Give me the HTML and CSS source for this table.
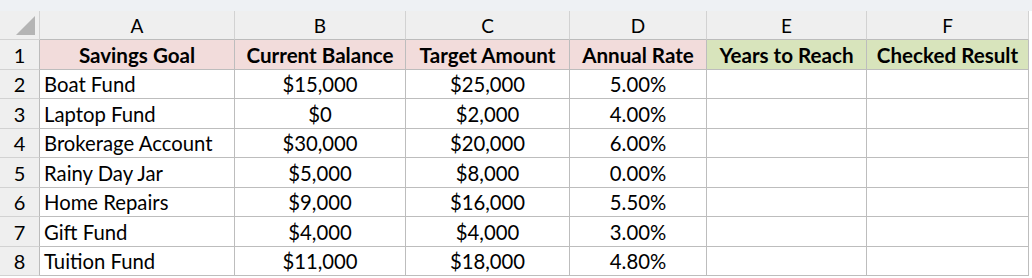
FILE: index.html
```html
<!DOCTYPE html>
<html>
<head>
<meta charset="utf-8">
<link rel="stylesheet" href="styles.css">
</head>
<body>
<div class="topbar"></div>
<div class="sheet">
  <div class="corner"><span class="tri"></span></div>
  <div class="colhdr">A</div>
  <div class="colhdr">B</div>
  <div class="colhdr">C</div>
  <div class="colhdr">D</div>
  <div class="colhdr">E</div>
  <div class="colhdr">F</div>

  <div class="rowhdr">1</div>
  <div class="cell th pink">Savings Goal</div>
  <div class="cell th pink">Current Balance</div>
  <div class="cell th pink">Target Amount</div>
  <div class="cell th pink">Annual Rate</div>
  <div class="cell th green">Years to Reach</div>
  <div class="cell th green">Checked Result</div>

  <div class="rowhdr">2</div>
  <div class="cell txt">Boat Fund</div>
  <div class="cell num">$15,000</div>
  <div class="cell num">$25,000</div>
  <div class="cell num">5.00%</div>
  <div class="cell"></div>
  <div class="cell"></div>

  <div class="rowhdr">3</div>
  <div class="cell txt">Laptop Fund</div>
  <div class="cell num">$0</div>
  <div class="cell num">$2,000</div>
  <div class="cell num">4.00%</div>
  <div class="cell"></div>
  <div class="cell"></div>

  <div class="rowhdr">4</div>
  <div class="cell txt">Brokerage Account</div>
  <div class="cell num">$30,000</div>
  <div class="cell num">$20,000</div>
  <div class="cell num">6.00%</div>
  <div class="cell"></div>
  <div class="cell"></div>

  <div class="rowhdr">5</div>
  <div class="cell txt">Rainy Day Jar</div>
  <div class="cell num">$5,000</div>
  <div class="cell num">$8,000</div>
  <div class="cell num">0.00%</div>
  <div class="cell"></div>
  <div class="cell"></div>

  <div class="rowhdr">6</div>
  <div class="cell txt">Home Repairs</div>
  <div class="cell num">$9,000</div>
  <div class="cell num">$16,000</div>
  <div class="cell num">5.50%</div>
  <div class="cell"></div>
  <div class="cell"></div>

  <div class="rowhdr">7</div>
  <div class="cell txt">Gift Fund</div>
  <div class="cell num">$4,000</div>
  <div class="cell num">$4,000</div>
  <div class="cell num">3.00%</div>
  <div class="cell"></div>
  <div class="cell"></div>

  <div class="rowhdr">8</div>
  <div class="cell txt">Tuition Fund</div>
  <div class="cell num">$11,000</div>
  <div class="cell num">$18,000</div>
  <div class="cell num">4.80%</div>
  <div class="cell"></div>
  <div class="cell"></div>
</div>
</body>
</html>
```
FILE: styles.css
```css
html, body {
  margin: 0;
  padding: 0;
  background: #ffffff;
  font-family: Lato, "Open Sans", Arial, sans-serif;
  color: #000000;
  width: 1032px;
  height: 278px;
  overflow: hidden;
}

.topbar {
  height: 11px;
  background: #eef1f4;
}

.sheet {
  display: grid;
  grid-template-columns: 40px 195px 171px 164px 137px 160px 162px;
  grid-template-rows: 29px 30px 29px 30px 29px 30px 29px 30px 29px;
  font-size: 20px;
}

.corner, .colhdr, .rowhdr {
  background: #efefef;
  box-sizing: border-box;
  border-right: 1px solid #d2d2d2;
  border-bottom: 1px solid #d2d2d2;
  display: flex;
  align-items: center;
  justify-content: center;
  font-size: 19px;
}

.colhdr {
  border-bottom-color: #bcbcbc;
  padding-top: 1px;
}

.rowhdr {
  border-right-color: #bcbcbc;
  font-size: 20px;
}

.corner {
  position: relative;
}

.tri {
  position: absolute;
  right: 4px;
  bottom: 4px;
  width: 0;
  height: 0;
  border-left: 19px solid transparent;
  border-bottom: 19px solid #b4b4b4;
}

.cell {
  box-sizing: border-box;
  border-right: 1px solid #bdbdbd;
  border-bottom: 1px solid #bdbdbd;
  display: flex;
  align-items: center;
  white-space: nowrap;
  overflow: hidden;
  font-size: 20.3px;
}

.th {
  justify-content: center;
  font-weight: 700;
  font-size: 20.6px;
}

.pink { background: #f2dcdb; }
.green { background: #d8e4bc; }

.txt {
  padding-left: 4px;
}

.num {
  justify-content: center;
}
```
